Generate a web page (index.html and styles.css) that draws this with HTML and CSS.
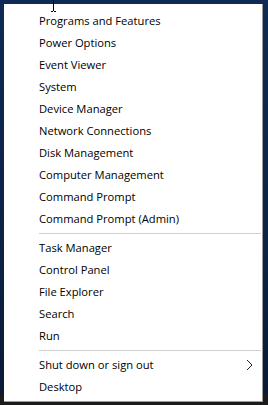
FILE: index.html
```html
<!DOCTYPE html>
<html>
<head>
<meta charset="utf-8">
<link rel="stylesheet" href="styles.css">
</head>
<body>
<div class="menu">
  <ul class="group">
    <li class="item">Programs and Features</li>
    <li class="item">Power Options</li>
    <li class="item">Event Viewer</li>
    <li class="item">System</li>
    <li class="item">Device Manager</li>
    <li class="item">Network Connections</li>
    <li class="item">Disk Management</li>
    <li class="item">Computer Management</li>
    <li class="item">Command Prompt</li>
    <li class="item">Command Prompt (Admin)</li>
  </ul>
  <div class="sep"></div>
  <ul class="group">
    <li class="item">Task Manager</li>
    <li class="item">Control Panel</li>
    <li class="item">File Explorer</li>
    <li class="item">Search</li>
    <li class="item">Run</li>
  </ul>
  <div class="sep"></div>
  <ul class="group">
    <li class="item sub">Shut down or sign out
      <svg class="chev" width="7" height="12" viewBox="0 0 7 12"><path d="M1 1 L6 6 L1 11" fill="none" stroke="#222" stroke-width="1"/></svg>
    </li>
    <li class="item">Desktop</li>
  </ul>
</div>
<svg class="cursor" width="9" height="13" viewBox="0 0 9 13">
  <path d="M4.5 0 V11 M2 11.5 H4 M5 11.5 H7" fill="none" stroke="#000" stroke-width="1"/>
</svg>
</body>
</html>
```
FILE: styles.css
```css
html, body {
  margin: 0;
  padding: 0;
  width: 268px;
  height: 405px;
  overflow: hidden;
}
body {
  background: linear-gradient(180deg, #0f2a55 0%, #0c2247 60%, #0a1a35 97%, #1b1b1b 97.5%);
  padding: 4px 0 0 4px;
  box-sizing: border-box;
  position: relative;
  font-family: "Open Sans", "Noto Sans", sans-serif;
}
.menu {
  width: 259px;
  height: 398px;
  box-sizing: border-box;
  background: #fff;
  border-right: 1px solid #9a9a9a;
  border-bottom: 1px solid #9a9a9a;
  padding-top: 6px;
}
.group {
  list-style: none;
  margin: 0;
  padding: 0;
}
.item {
  height: 22px;
  line-height: 22px;
  padding-left: 35px;
  font-size: 11.2px;
  color: #000;
  display: flex;
  align-items: center;
  justify-content: space-between;
  padding-right: 9px;
}
.sep {
  height: 1px;
  background: #d0d0d0;
  margin: 3px 0 3px 35px;
  width: 222px;
}
.chev {
  display: block;
}
.cursor {
  position: absolute;
  left: 49px;
  top: 0;
}
```
